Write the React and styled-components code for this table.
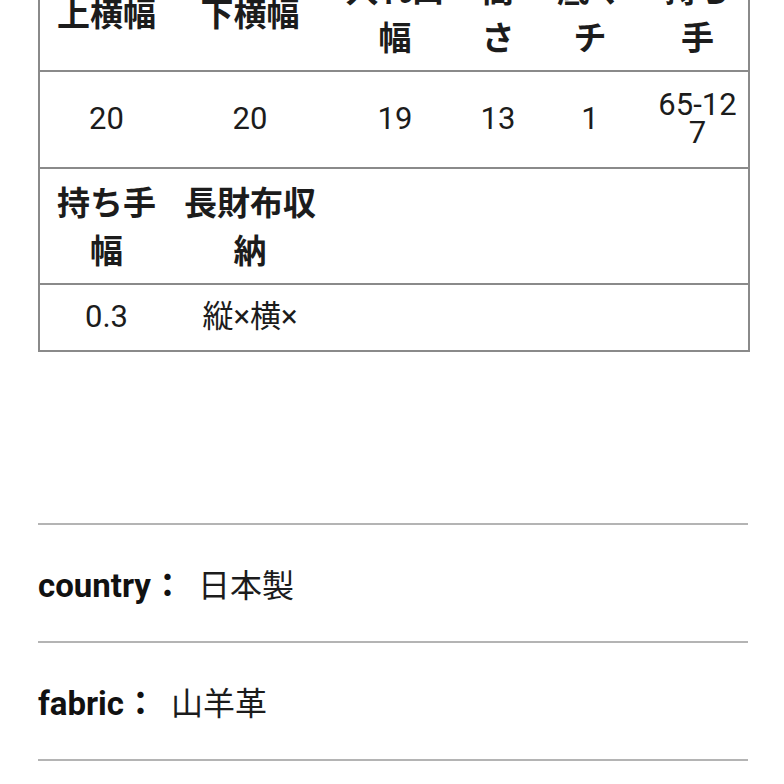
import React from "react";
import styled, { createGlobalStyle } from "styled-components";

const GlobalStyle = createGlobalStyle`
  body {
    margin: 0;
    background: #ffffff;
    font-family: Roboto, "Noto Sans CJK JP", sans-serif;
    color: #1c1c1c;
  }
`;

//Styled-components
const Page = styled.div`
  margin-top: -46px;
  padding: 0 36px 0 38px;
`;

const SizeTable = styled.table`
  width: 100%;
  table-layout: fixed;
  border-collapse: collapse;
  border: 2px solid #8a8a8a;
`;

const Row = styled.tr`
  border-bottom: 2px solid #8a8a8a;
`;

const HeadCell = styled.th`
  padding: 11px 10px 7px;
  font-size: 33px;
  line-height: 48px;
  font-weight: 700;
  text-align: center;
  vertical-align: middle;
  word-break: break-all;
`;

const DataCell = styled.td`
  padding: ${(p) => (p.$compact ? "18px 10px 19px" : "19px 10px 20px")};
  font-size: 31px;
  line-height: 28px;
  font-weight: 400;
  text-align: center;
  vertical-align: middle;
  word-break: break-all;
`;

const SpecList = styled.div`
  margin-top: 171px;
  border-bottom: 2px solid #b4b4b4;
`;

const SpecRow = styled.div`
  display: flex;
  align-items: center;
  height: 116px;
  border-top: 2px solid #b4b4b4;
  font-size: 33px;
`;

const SpecLabel = styled.span`
  font-weight: 700;
  color: #111111;
`;

const SpecValue = styled.span`
  font-weight: 400;
  font-size: 32px;
  margin-left: 14px;
`;

const columns = [134, 154, 136, 70, 114, 102];

const sizes = [
  { label: "上横幅", value: "20" },
  { label: "下横幅", value: "20" },
  { label: "入れ口幅", value: "19" },
  { label: "高さ", value: "13" },
  { label: "底マチ", value: "1" },
  { label: "持ち手", value: "65-127" },
];

const extras = [
  { label: "持ち手幅", value: "0.3" },
  { label: "長財布収納", value: "縦×横×" },
];

const specs = [
  { label: "country", value: "日本製" },
  { label: "fabric", value: "山羊革" },
];

const App = () => {
  return (
    <>
      <GlobalStyle />
      <Page>
        <SizeTable>
          <colgroup>
            {columns.map((w, i) => (
              <col key={i} style={{ width: `${w}px` }} />
            ))}
          </colgroup>
          <tbody>
            <Row>
              {sizes.map((s) => (
                <HeadCell key={s.label}>{s.label}</HeadCell>
              ))}
            </Row>
            <Row>
              {sizes.map((s) => (
                <DataCell key={s.label}>{s.value}</DataCell>
              ))}
            </Row>
            <Row>
              {extras.map((s) => (
                <HeadCell key={s.label}>{s.label}</HeadCell>
              ))}
              <HeadCell colSpan={4} />
            </Row>
            <Row>
              {extras.map((s) => (
                <DataCell $compact key={s.label}>
                  {s.value}
                </DataCell>
              ))}
              <DataCell $compact colSpan={4} />
            </Row>
          </tbody>
        </SizeTable>

        <SpecList>
          {specs.map((s) => (
            <SpecRow key={s.label}>
              <SpecLabel>{s.label}：</SpecLabel>
              <SpecValue>{s.value}</SpecValue>
            </SpecRow>
          ))}
        </SpecList>
      </Page>
    </>
  );
};

export default App;
